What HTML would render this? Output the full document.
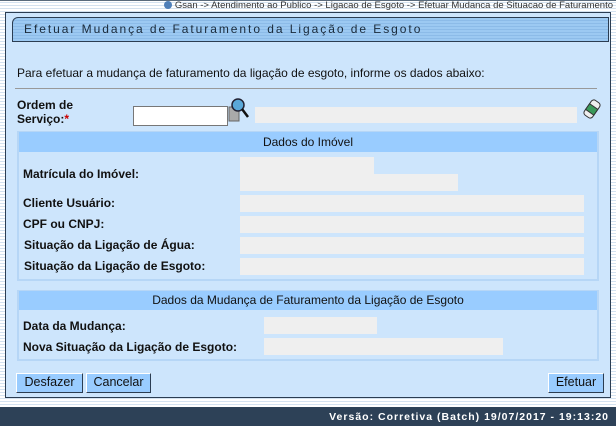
<!DOCTYPE html>
<html><head><meta charset="utf-8"><style>
*{margin:0;padding:0;box-sizing:border-box}
body{width:616px;height:426px;overflow:hidden;position:relative;font-family:"Liberation Sans",Arial,sans-serif;background:repeating-linear-gradient(#fff 0 2px,#d4e2f0 2px 3px);}
.a{position:absolute}
.bc{top:0;right:3px;font-size:9.5px;color:#333;white-space:nowrap;line-height:11px}
.panel{left:5px;top:12px;width:606px;height:386px;background:#cde5fc;border:1px solid #2b3d52}
.title{left:12px;top:17px;width:597px;height:25px;border:1px solid #2b3d52;border-radius:6px 0 0 0;background:repeating-linear-gradient(#9cc9f2 0 2px,#8cbbe8 2px 3px);font-size:12px;letter-spacing:1.95px;color:#1a2a3a;padding:4px 0 0 11px}
.t{font-size:12px;color:#111;white-space:nowrap}
.b{font-weight:bold;font-size:12px}
.g{background:#efefef}
.sec{border:2px solid #b6d6f6;background:#cde5fc}
.hd{background:#99ccff;text-align:center;font-size:12px;color:#111}
.btn{top:373px;height:20px;background:#99ccff;border:1px solid #2b3d52;border-top-color:#fff;border-left-color:#fff;font-size:12.5px;color:#111;text-align:center;line-height:17px}
.foot{left:0;top:407px;width:616px;height:19px;background:#2d4157;color:#fff;font-weight:bold;font-size:10.5px;letter-spacing:1px;text-align:right;padding:4px 7px 0 0}
</style></head><body>
<div class="a" style="left:0;top:0;width:616px;height:1px;background:#5a6b7c"></div>
<div class="a bc"><span style="display:inline-block;width:8px;height:8px;border-radius:50%;background:#4f7fb8;vertical-align:-1px"></span> Gsan -&gt; Atendimento ao Publico -&gt; Ligacao de Esgoto -&gt; Efetuar Mudanca de Situacao de Faturamento</div>
<div class="a panel"></div>
<div class="a title">Efetuar Mudança de Faturamento da Ligação de Esgoto</div>
<div class="a t" style="left:17px;top:66px">Para efetuar a mudança de faturamento da ligação de esgoto, informe os dados abaixo:</div>
<div class="a" style="left:15px;top:88px;width:582px;height:1px;background:#999"></div>
<div class="a t b" style="left:17px;top:98px;line-height:14px">Ordem de<br>Serviço:<span style="color:#c00">*</span></div>
<div class="a" style="left:133px;top:106px;width:95px;height:20px;background:#fff;border:1px solid #777"></div>
<svg class="a" style="left:228px;top:97px" width="24" height="28"><rect x="1" y="10" width="10" height="14" fill="#aaa" stroke="#666"/><circle cx="10" cy="8" r="6" fill="#5aa8d8" stroke="#223" stroke-width="1.5"/><line x1="14" y1="12" x2="20" y2="20" stroke="#111" stroke-width="2.5"/></svg>
<div class="a g" style="left:255px;top:107px;width:322px;height:16px"></div>
<svg class="a" style="left:583px;top:98px" width="18" height="22"><g transform="rotate(35 9 11)"><rect x="4" y="2" width="10" height="18" rx="3" fill="#eee" stroke="#333"/><rect x="4" y="8" width="10" height="7" fill="#3a9a5a" stroke="#333"/></g></svg>

<div class="a sec" style="left:17px;top:131px;width:582px;height:150px"></div>
<div class="a hd" style="left:19px;top:132px;width:578px;height:20px;line-height:20px">Dados do Imóvel</div>
<div class="a t b" style="left:23px;top:167px">Matrícula do Imóvel:</div>
<div class="a g" style="left:240px;top:157px;width:134px;height:17px"></div>
<div class="a g" style="left:240px;top:174px;width:218px;height:17px"></div>
<div class="a t b" style="left:23px;top:196px">Cliente Usuário:</div>
<div class="a g" style="left:240px;top:195px;width:344px;height:17px"></div>
<div class="a t b" style="left:23px;top:217px">CPF ou CNPJ:</div>
<div class="a g" style="left:240px;top:216px;width:344px;height:17px"></div>
<div class="a t b" style="left:24px;top:238px">Situação da Ligação de Água:</div>
<div class="a g" style="left:240px;top:237px;width:344px;height:17px"></div>
<div class="a t b" style="left:24px;top:259px">Situação da Ligação de Esgoto:</div>
<div class="a g" style="left:240px;top:258px;width:344px;height:17px"></div>

<div class="a sec" style="left:17px;top:290px;width:582px;height:71px"></div>
<div class="a hd" style="left:19px;top:291px;width:578px;height:19px;line-height:19px">Dados da Mudança de Faturamento da Ligação de Esgoto</div>
<div class="a t b" style="left:23px;top:319px">Data da Mudança:</div>
<div class="a g" style="left:264px;top:317px;width:113px;height:17px"></div>
<div class="a t b" style="left:23px;top:340px">Nova Situação da Ligação de Esgoto:</div>
<div class="a g" style="left:264px;top:338px;width:239px;height:17px"></div>

<div class="a btn" style="left:16px;width:67px">Desfazer</div>
<div class="a btn" style="left:86px;width:65px">Cancelar</div>
<div class="a btn" style="left:548px;width:56px">Efetuar</div>
<div class="a foot">Versão: Corretiva (Batch) 19/07/2017 - 19:13:20</div>
</body></html>
